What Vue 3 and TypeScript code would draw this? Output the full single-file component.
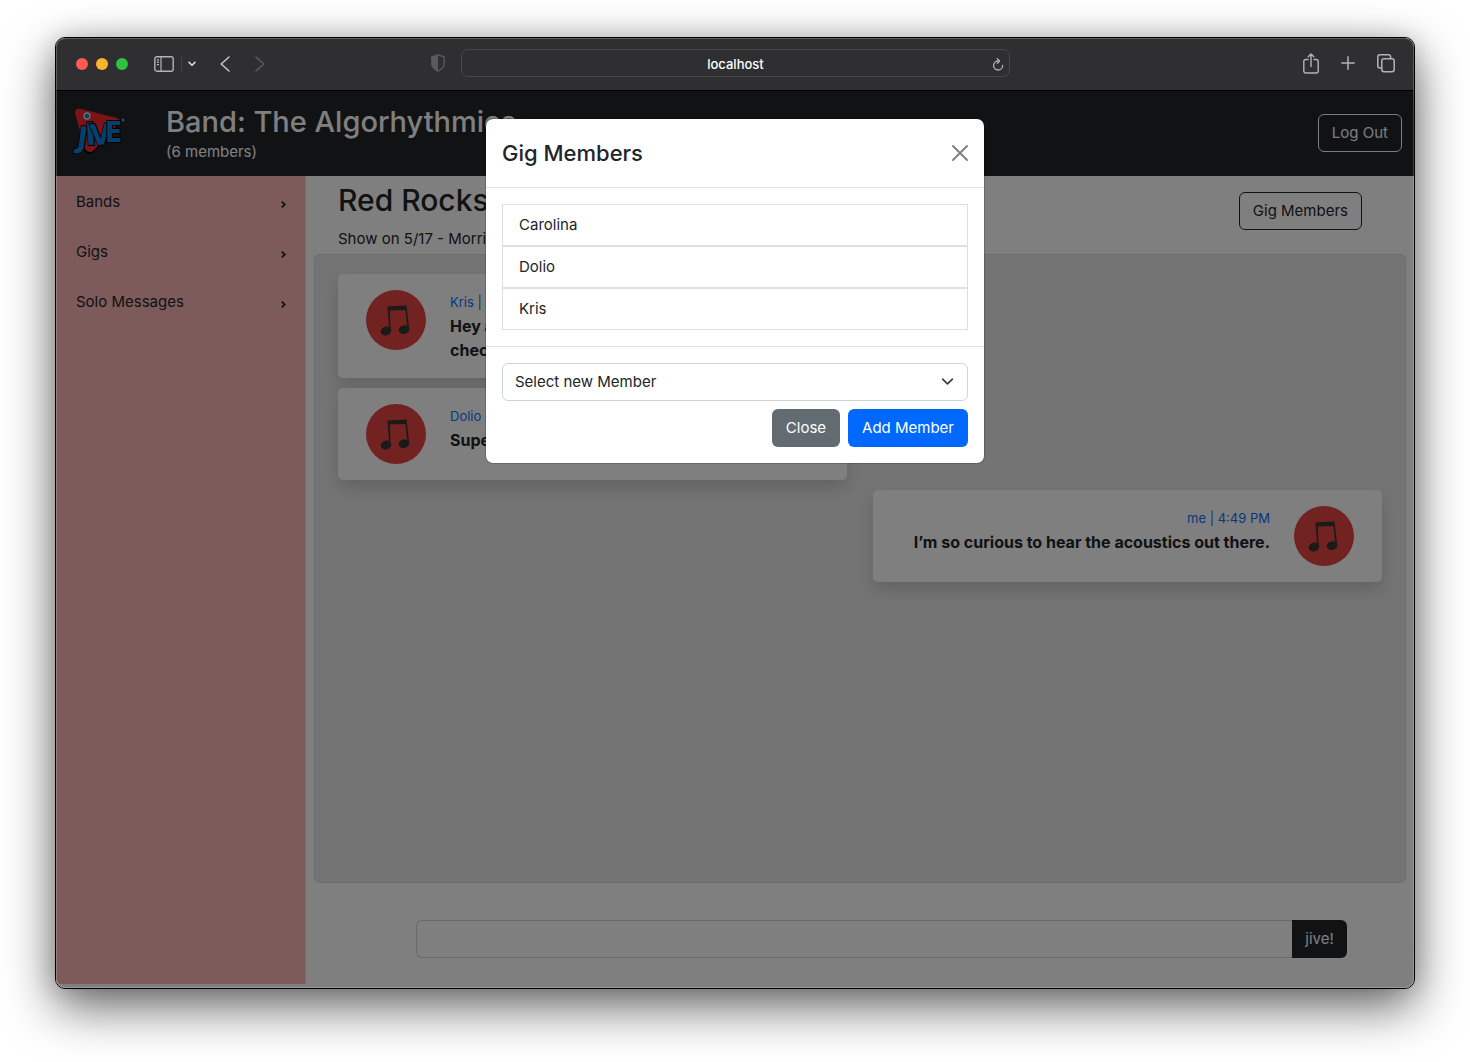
<script setup lang="ts">
import { ref } from 'vue'

interface Message {
  id: number
  author: string
  time: string
  text: string
  mine: boolean
}

const navItems: string[] = ['Bands', 'Gigs', 'Solo Messages']
const members: string[] = ['Carolina', 'Dolio', 'Kris']
const candidates: string[] = ['Alex', 'Jordan', 'Sam']

const messages: Message[] = [
  { id: 1, author: 'Kris', time: '4:47 PM', text: 'Hey all, what time is sound\ncheck on Friday?', mine: false },
  { id: 2, author: 'Dolio', time: '4:48 PM', text: 'Super excited for this one!', mine: false },
  { id: 3, author: 'me', time: '4:49 PM', text: 'I’m so curious to hear the acoustics out there.', mine: true },
]

const draft = ref('')
const selected = ref('')
const address = ref('localhost')
</script>

<template>
  <div class="desktop">
    <div class="window">
      <header class="toolbar">
        <div class="tools left">
          <span class="light red"></span>
          <span class="light yellow"></span>
          <span class="light green"></span>
          <button class="tool sidebar-tool" aria-label="Show sidebar">
            <svg width="20" height="16" viewBox="0 0 20 16" fill="none" stroke="#b4b4b5" stroke-width="1.4">
              <rect x="0.8" y="0.8" width="18.4" height="14.4" rx="2" />
              <path d="M7 1v14M2.8 3.8h2.2M2.8 6.2h2.2M2.8 8.6h2.2" stroke-width="1.2" />
            </svg>
          </button>
          <span class="divider"></span>
          <button class="tool menu-tool" aria-label="Sidebar options">
            <svg width="8" height="6" viewBox="0 0 8 6" fill="none" stroke="#dededf" stroke-width="1.6" stroke-linecap="round" stroke-linejoin="round">
              <path d="M1 1.3 4 4.3 7 1.3" />
            </svg>
          </button>
          <button class="tool back-tool" aria-label="Back">
            <svg width="10" height="16" viewBox="0 0 10 16" fill="none" stroke="#c2c2c3" stroke-width="1.6" stroke-linecap="round" stroke-linejoin="round">
              <path d="M9 1 1.2 8 9 15" />
            </svg>
          </button>
          <button class="tool forward-tool" aria-label="Forward">
            <svg width="10" height="16" viewBox="0 0 10 16" fill="none" stroke="#59595b" stroke-width="1.6" stroke-linecap="round" stroke-linejoin="round">
              <path d="M1 1 8.8 8 1 15" />
            </svg>
          </button>
        </div>
        <div class="address-area">
          <svg class="shield" width="14" height="18" viewBox="0 0 14 18">
            <path d="M7 .8 13.2 3v7c0 3.200-2.600 5.400-6.200 7.200C3.400 15.400.8 13.200.8 10V3z" fill="none" stroke="#5a5a5c" stroke-width="1.4" stroke-linejoin="round" />
            <path d="M7 .8v16.400C3.400 15.400.8 13.200.8 10V3z" fill="#5a5a5c" />
          </svg>
          <div class="address">
            <input v-model="address" aria-label="Address" />
            <button class="tool reload" aria-label="Reload">
              <svg width="12" height="13" viewBox="0 0 12 13" fill="none" stroke="#b4b4b5" stroke-width="1.3" stroke-linecap="round" stroke-linejoin="round">
                <path d="M6.600 3H6a4.500 4.500 0 1 0 4.600 4.400" />
                <path d="M5.200 .8 7.600 3 5.400 5.400" />
              </svg>
            </button>
          </div>
        </div>
        <div class="tools right">
          <button class="tool" aria-label="Share">
            <svg width="16" height="21" viewBox="0 0 16 21" fill="none" stroke="#b4b4b5" stroke-width="1.4" stroke-linecap="round" stroke-linejoin="round">
              <path d="M5 6.500H2.800A2 2 0 0 0 .8 8.500v9.500a2 2 0 0 0 2 2h10.400a2 2 0 0 0 2-2V8.500a2 2 0 0 0-2-2H11M8 13.500V1M5.200 3.800 8 1l2.800 2.800" />
            </svg>
          </button>
          <button class="tool" aria-label="New tab">
            <svg width="14" height="14" viewBox="0 0 14 14" fill="none" stroke="#b4b4b5" stroke-width="1.5" stroke-linecap="round">
              <path d="M7 .8v12.400M.8 7h12.400" />
            </svg>
          </button>
          <button class="tool" aria-label="Tab overview">
            <svg width="18" height="19" viewBox="0 0 18 19" fill="none" stroke="#b4b4b5" stroke-width="1.5" stroke-linejoin="round">
              <rect x="4.800" y="4.800" width="12.400" height="13" rx="2.200" />
              <path d="M4.800 14H3A2.200 2.200 0 0 1 .8 11.800V3A2.200 2.200 0 0 1 3 .8h8.400A2.200 2.200 0 0 1 13.600 3v1.800" />
            </svg>
          </button>
        </div>
      </header>

      <div class="page">
        <header class="band-bar">
          <svg class="logo" width="56" height="52" viewBox="0 0 56 52" role="img" aria-label="Jive">
            <path d="M4 7 Q4 2 9 4 L46 13 Q50 16 46 20 L22 45 Q16 50 12 43 Z" fill="#050505" />
            <path d="M3 6 Q3 1 9 2 L45 11 Q50 13 46 17 L22 43 Q17 48 13 42 Z" fill="#f9282e" />
            <g class="logo-word">
              <text x="4" y="41" font-size="30" transform="rotate(8 10 40)">J</text>
              <text x="14" y="38" font-size="31" transform="rotate(-4 18 38)">I</text>
              <text x="19" y="38" font-size="29" transform="rotate(-4 26 37)">V</text>
              <text x="33" y="35" font-size="28">E</text>
            </g>
            <circle cx="15" cy="9" r="3" fill="#0c7ed6" stroke="#d8dde2" stroke-width="1.300" />
            <circle cx="51" cy="13" r="1.400" fill="#5f9bd6" />
          </svg>
          <div class="band-title">
            <h1>Band: The Algorhythmics</h1>
            <p>(6 members)</p>
          </div>
          <button class="btn outline-light">Log Out</button>
        </header>

        <div class="columns">
          <nav class="sidebar">
            <a v-for="item in navItems" :key="item" href="#">
              <span>{{ item }}</span>
              <svg width="5" height="7" viewBox="0 0 5 7" fill="none" stroke="#222" stroke-width="1.800">
                <path d="M.8 .7 3.800 3.500.8 6.300" />
              </svg>
            </a>
          </nav>

          <main class="content">
            <div class="gig-head">
              <div>
                <h2>Red Rocks</h2>
                <p>Show on 5/17 - Morrison</p>
              </div>
              <button class="btn outline-dark">Gig Members</button>
            </div>

            <section class="thread">
              <article v-for="m in messages" :key="m.id" class="card" :class="{ mine: m.mine }">
                <svg class="avatar" width="60" height="60" viewBox="0 0 60 60">
                  <circle cx="30" cy="30" r="30" fill="#e64444" />
                  <g fill="#353530">
                    <path d="M21.500 16.400 40.500 15.600 43.200 38.800 41.600 39 39.300 20 23.700 20.600 24.700 41 23.200 41z" />
                    <ellipse cx="20" cy="41" rx="5.400" ry="4.300" transform="rotate(-14 20 41)" />
                    <ellipse cx="38" cy="39.600" rx="5.400" ry="4.300" transform="rotate(-14 38 39.600)" />
                  </g>
                </svg>
                <div class="message">
                  <span class="meta">{{ m.author }} | {{ m.time }}</span>
                  <p>{{ m.text }}</p>
                </div>
              </article>
            </section>

            <form class="composer" @submit.prevent>
              <input v-model="draft" aria-label="Message" />
              <button type="submit">jive!</button>
            </form>
          </main>
        </div>

        <div class="backdrop"></div>
        <div class="modal" role="dialog" aria-labelledby="modal-title">
          <div class="modal-head">
            <h3 id="modal-title">Gig Members</h3>
            <button class="close" aria-label="Close dialog">
              <svg width="16" height="16" viewBox="0 0 16 16" fill="none" stroke="#808080" stroke-width="1.900" stroke-linecap="round">
                <path d="M1 1 15 15M15 1 1 15" />
              </svg>
            </button>
          </div>
          <div class="modal-body">
            <ul>
              <li v-for="name in members" :key="name">{{ name }}</li>
            </ul>
          </div>
          <div class="modal-foot">
            <div class="select-wrap">
              <select v-model="selected" aria-label="Select new Member">
                <option value="">Select new Member</option>
                <option v-for="name in candidates" :key="name" :value="name">{{ name }}</option>
              </select>
              <svg width="16" height="16" viewBox="0 0 16 16" fill="none" stroke="#343a40" stroke-width="2" stroke-linecap="round" stroke-linejoin="round">
                <path d="m2 5 6 6 6-6" />
              </svg>
            </div>
            <div class="actions">
              <button class="btn secondary">Close</button>
              <button class="btn primary">Add Member</button>
            </div>
          </div>
        </div>
      </div>
    </div>
  </div>
</template>

<style>
body {
  margin: 0;
  background: #fff;
}
</style>

<style scoped>
* {
  box-sizing: border-box;
}
h1, h2, h3, p, ul {
  margin: 0;
  padding: 0;
}
button, input, select {
  font: inherit;
  margin: 0;
}
svg {
  display: block;
  flex: none;
}
.desktop {
  display: flex;
  min-height: 100vh;
  padding: 37px 55px 73px;
  overflow: hidden;
  font-family: Inter, "Liberation Sans", sans-serif;
  font-size: 15px;
  line-height: 24px;
  color: #212529;
}
.window {
  position: relative;
  display: flex;
  flex: 1;
  flex-direction: column;
  min-width: 0;
  border: 1px solid #000;
  border-radius: 10px;
  overflow: hidden;
  background: #fff;
  box-shadow: 0 18px 50px rgba(0, 0, 0, 0.6), 0 0 24px rgba(0, 0, 0, 0.15);
}
.window::after {
  content: "";
  position: absolute;
  inset: 0;
  border: 1px solid rgba(255, 255, 255, 0.22);
  border-radius: 9px;
  pointer-events: none;
}
.toolbar {
  display: flex;
  align-items: center;
  height: 53px;
  padding: 0 19px 0 20px;
  border-bottom: 1px solid #000;
  background: #2f2f31;
}
.tools {
  display: flex;
  flex: 1;
  align-items: center;
}
.tools.right {
  justify-content: flex-end;
  gap: 29px;
  padding-bottom: 2px;
}
.tools.right .tool:nth-child(2) {
  margin: 0 -7px;
}
.tool {
  padding: 0;
  border: 0;
  background: none;
}
.light {
  width: 12px;
  height: 12px;
  margin-right: 8px;
  border-radius: 50%;
}
.red { background: #ff5b55; }
.yellow { background: #fdb32e; }
.green { background: #2fc23e; }
.sidebar-tool { margin-left: 18px; }
.divider {
  width: 1px;
  height: 18px;
  margin-left: 7px;
  background: #414143;
}
.menu-tool { margin-left: 6px; }
.back-tool { margin-left: 24px; }
.forward-tool { margin-left: 25px; }
.address-area {
  display: flex;
  flex: 0 1 579px;
  align-items: center;
  gap: 16px;
  margin-right: 31px;
  padding-bottom: 2px;
}
.address {
  display: flex;
  flex: 1;
  align-items: center;
  height: 28px;
  padding: 2px 5px 0 18px;
  border: 1px solid #48484a;
  border-radius: 7px;
}
.address input {
  flex: 1;
  min-width: 0;
  padding: 0;
  border: 0;
  outline: 0;
  background: none;
  color: #fff;
  font-size: 13px;
  font-weight: 500;
  text-align: center;
}
.page {
  position: relative;
  display: flex;
  flex: 1;
  flex-direction: column;
}
.band-bar {
  display: flex;
  height: 85px;
  padding: 0 12px 2px 16px;
  align-items: center;
  background: #212529;
  color: #fff;
}
.logo {
  overflow: visible;
}
.logo-word {
  font-family: "Liberation Sans Narrow", "DejaVu Sans Condensed", sans-serif;
  font-weight: 700;
  fill: #0c7ed6;
  stroke: #050505;
  stroke-width: 2px;
  paint-order: stroke;
}
.band-title {
  flex: 1;
  margin-left: 38px;
}
h1, h2 {
  font-size: 30px;
  font-weight: 500;
  line-height: 38px;
}
h1 {
  font-size: 29px;
}
.band-title p {
  line-height: 22px;
}
.btn {
  height: 38px;
  padding: 0 13px;
  border: 1px solid transparent;
  border-radius: 6px;
  background: none;
  white-space: nowrap;
}
.outline-light {
  border-color: #f8f9fa;
  color: #f8f9fa;
}
.outline-dark {
  border-color: #212529;
  color: #212529;
}
.secondary {
  background: #626b72;
  color: #fff;
}
.primary {
  background: #0168fe;
  color: #fff;
}
.columns {
  display: flex;
  flex: 1;
}
.sidebar {
  width: 250px;
  margin-bottom: 4px;
  border-right: 1px solid #e8e0e0;
  background: #fbb6b6;
}
.sidebar a {
  display: flex;
  align-items: center;
  justify-content: space-between;
  height: 50px;
  padding: 2px 19px 0 20px;
  color: #212529;
  text-decoration: none;
}
.sidebar svg {
  margin-top: 4px;
}
.content {
  display: flex;
  flex: 1;
  flex-direction: column;
  min-width: 0;
  padding: 0 8px 30px;
}
.gig-head {
  display: flex;
  align-items: flex-start;
  justify-content: space-between;
  height: 78px;
  padding: 5px 44px 0 24px;
}
.gig-head p {
  margin-top: 8px;
}
.gig-head .btn {
  margin-top: 11px;
}
.thread {
  display: flex;
  flex: 1;
  flex-direction: column;
  gap: 10px;
  padding: 19px 23px;
  border: 1px solid #d6d8da;
  border-radius: 6px;
  background: #e8e8e8;
}
.card {
  display: flex;
  align-items: flex-start;
  gap: 24px;
  width: calc(50% - 13px);
  padding: 16px 28px;
  border-radius: 5px;
  background: #fff;
  box-shadow: 0 8px 16px rgba(0, 0, 0, 0.15);
}
.card.mine {
  flex-direction: row-reverse;
  align-self: flex-end;
  text-align: right;
}
.meta {
  display: block;
  color: #0d6efd;
  font-size: 13px;
}
.message p {
  font-size: 16px;
  font-weight: 700;
  white-space: pre-line;
}
.composer {
  display: flex;
  height: 38px;
  margin: 37px 59px 0 102px;
}
.composer input {
  flex: 1;
  min-width: 0;
  padding: 0 12px;
  border: 1px solid #ced4da;
  border-right: 0;
  border-radius: 6px 0 0 6px;
  background: #fff;
}
.composer button {
  padding: 0;
  width: 55px;
  border: 0;
  border-radius: 0 6px 6px 0;
  background: #212529;
  color: #fff;
}
.backdrop {
  position: absolute;
  inset: 0;
  background: rgba(0, 0, 0, 0.5);
}
.modal {
  position: absolute;
  top: 27px;
  left: 50%;
  width: 500px;
  margin-left: -250px;
  border: 1px solid rgba(0, 0, 0, 0.18);
  border-radius: 8px;
  background: #fff;
  background-clip: padding-box;
}
.modal-head {
  display: flex;
  align-items: center;
  justify-content: space-between;
  height: 69px;
  padding: 0 16px;
  border-bottom: 1px solid #dee2e6;
}
h3 {
  font-size: 22px;
  font-weight: 500;
  line-height: 36px;
}
.close {
  padding: 0;
  border: 0;
  background: none;
}
.modal-body {
  padding: 16px;
}
ul {
  list-style: none;
}
li {
  height: 42px;
  padding: 8px 16px;
  border: 1px solid #dfdfdf;
}
.modal-foot {
  display: flex;
  flex-direction: column;
  gap: 8px;
  padding: 16px;
  border-top: 1px solid #dee2e6;
}
.select-wrap {
  position: relative;
}
select {
  display: block;
  width: 100%;
  height: 38px;
  padding: 0 36px 0 12px;
  appearance: none;
  border: 1px solid #ced4da;
  border-radius: 6px;
  background: #fff;
  color: #212529;
}
.select-wrap svg {
  position: absolute;
  top: 12px;
  right: 14px;
  width: 13px;
  height: 13px;
  pointer-events: none;
}
.actions {
  display: flex;
  justify-content: flex-end;
  gap: 8px;
}
</style>
